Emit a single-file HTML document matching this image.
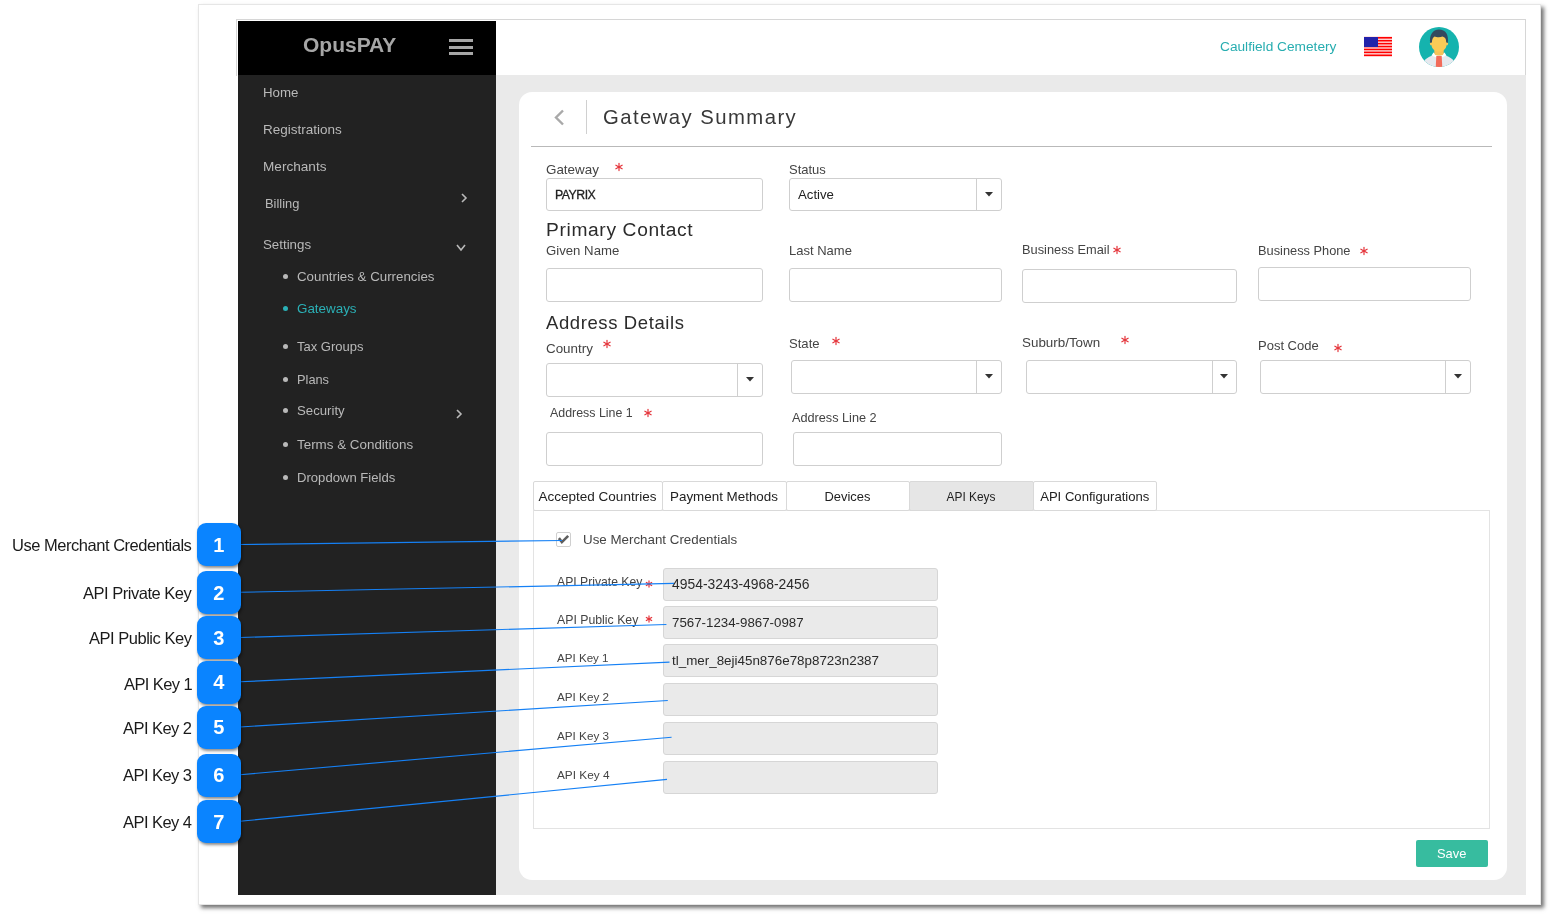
<!DOCTYPE html>
<html><head><meta charset="utf-8"><title>Gateway Summary</title>
<style>
html,body{margin:0;padding:0;background:#fff;width:1550px;height:914px;overflow:hidden;}
body{position:relative;font-family:"Liberation Sans", sans-serif;}
.t{position:absolute;white-space:nowrap;will-change:transform;}
.b{position:absolute;box-sizing:border-box;}
svg{position:absolute;overflow:visible;}
</style></head><body>

<div class="b" style="left:198px;top:4px;width:1343px;height:901px;background:#fff;border:1px solid #e6e6e6;box-shadow:3px 3px 4px rgba(0,0,0,0.55);"></div>
<div class="b" style="left:236px;top:19px;width:1290px;height:57px;border:1px solid #d6d6d6;border-bottom:none;background:#fff;"></div>
<div class="b" style="left:238px;top:21px;width:258px;height:54px;background:#000;"></div>
<div class="b" style="left:238px;top:75px;width:258px;height:820px;background:#222;"></div>
<div class="b" style="left:496px;top:75px;width:1030px;height:820px;background:#eaeaea;"></div>
<div class="b" style="left:519px;top:92px;width:988px;height:788px;background:#fff;border-radius:13px;"></div>
<div class="t" style="left:302.6px;top:34.00px;font-size:21.00px;line-height:21.00px;color:#a6a6a6;font-weight:700;">OpusPAY</div>
<div class="b" style="left:449px;top:39px;width:24px;height:3px;background:#a6a6a6;"></div>
<div class="b" style="left:449px;top:45.6px;width:24px;height:3.0px;background:#a6a6a6;"></div>
<div class="b" style="left:449px;top:52px;width:24px;height:3px;background:#a6a6a6;"></div>
<div class="t" style="left:263.2px;top:86.00px;font-size:13.30px;line-height:13.30px;color:#b9b9b9;font-weight:400;">Home</div>
<div class="t" style="left:263.2px;top:123.00px;font-size:13.50px;line-height:13.50px;color:#b9b9b9;font-weight:400;">Registrations</div>
<div class="t" style="left:263.2px;top:160.00px;font-size:13.60px;line-height:13.60px;color:#b9b9b9;font-weight:400;">Merchants</div>
<div class="t" style="left:265.3px;top:198.00px;font-size:12.90px;line-height:12.90px;color:#b9b9b9;font-weight:400;">Billing</div>
<div class="t" style="left:263.0px;top:238.00px;font-size:13.30px;line-height:13.30px;color:#b9b9b9;font-weight:400;">Settings</div>
<div class="t" style="left:297.2px;top:270.00px;font-size:13.30px;line-height:13.30px;color:#b9b9b9;font-weight:400;">Countries &amp; Currencies</div>
<div class="b" style="left:283px;top:273.8px;width:5px;height:5.0px;background:#b9b9b9;border-radius:50%;"></div>
<div class="t" style="left:297.2px;top:302.00px;font-size:13.40px;line-height:13.40px;color:#2bb0b6;font-weight:400;">Gateways</div>
<div class="b" style="left:283px;top:305.7px;width:5px;height:5.0px;background:#2bb0b6;border-radius:50%;"></div>
<div class="t" style="left:297.2px;top:340.00px;font-size:13.00px;line-height:13.00px;color:#b9b9b9;font-weight:400;">Tax Groups</div>
<div class="b" style="left:283px;top:343.9px;width:5px;height:5.0px;background:#b9b9b9;border-radius:50%;"></div>
<div class="t" style="left:297.2px;top:374.00px;font-size:12.80px;line-height:12.80px;color:#b9b9b9;font-weight:400;">Plans</div>
<div class="b" style="left:283px;top:376.7px;width:5px;height:5.0px;background:#b9b9b9;border-radius:50%;"></div>
<div class="t" style="left:297.2px;top:404.00px;font-size:13.20px;line-height:13.20px;color:#b9b9b9;font-weight:400;">Security</div>
<div class="b" style="left:283px;top:407.9px;width:5px;height:5.0px;background:#b9b9b9;border-radius:50%;"></div>
<div class="t" style="left:297.2px;top:438.00px;font-size:13.40px;line-height:13.40px;color:#b9b9b9;font-weight:400;">Terms &amp; Conditions</div>
<div class="b" style="left:283px;top:441.7px;width:5px;height:5.0px;background:#b9b9b9;border-radius:50%;"></div>
<div class="t" style="left:297.2px;top:471.00px;font-size:13.10px;line-height:13.10px;color:#b9b9b9;font-weight:400;">Dropdown Fields</div>
<div class="b" style="left:283px;top:474.5px;width:5px;height:5.0px;background:#b9b9b9;border-radius:50%;"></div>
<svg style="left:461px;top:193px" width="6" height="10"><polyline points="1,1 5,5.0 1,9" fill="none" stroke="#b9b9b9" stroke-width="1.6"/></svg>
<svg style="left:455.8px;top:243.9px" width="10" height="7"><polyline points="1,1 5.0,6 9,1" fill="none" stroke="#b9b9b9" stroke-width="1.6"/></svg>
<svg style="left:456px;top:408.5px" width="6" height="10"><polyline points="1,1 5,5.0 1,9" fill="none" stroke="#b9b9b9" stroke-width="1.6"/></svg>
<div class="t" style="left:1220.0px;top:40.00px;font-size:13.70px;line-height:13.70px;color:#27adb0;font-weight:400;">Caulfield Cemetery</div>
<svg style="left:1364px;top:37.2px" width="28" height="19" viewBox="0 0 28 19"><rect width="28" height="19" fill="#fff"/><rect x="0" y="-0.10" width="28" height="1.75" fill="#f00"/><rect x="0" y="2.82" width="28" height="1.75" fill="#f00"/><rect x="0" y="5.75" width="28" height="1.75" fill="#f00"/><rect x="0" y="8.67" width="28" height="1.75" fill="#f00"/><rect x="0" y="11.59" width="28" height="1.75" fill="#f00"/><rect x="0" y="14.52" width="28" height="1.75" fill="#f00"/><rect x="0" y="17.44" width="28" height="1.75" fill="#f00"/><rect x="0" y="0" width="28" height="19" fill="none"/><rect x="0" y="0" width="14" height="10" fill="#2222aa"/></svg>
<svg style="left:1419px;top:27px" width="40" height="40" viewBox="0 0 40 40">
<defs><clipPath id="cc"><circle cx="20" cy="20" r="20"/></clipPath></defs>
<circle cx="20" cy="20" r="20" fill="#15b3ae"/>
<g clip-path="url(#cc)">
<path d="M2,41 C3,34 8,30 15,28 L25,28 C32,30 37,34 38,41 Z" fill="#e6e9ef"/>
<polygon points="14.5,25.5 20,29.5 25.5,25.5 27.5,28.5 20,31.5 12.5,28.5" fill="#ffffff"/>
<rect x="15.3" y="20" width="9.4" height="8.5" rx="3" fill="#f5c35a"/>
<polygon points="17.3,29 22.7,29 23.3,41 16.7,41" fill="#f26b5a"/>
<ellipse cx="12.2" cy="16.6" rx="1.3" ry="2" fill="#f9c95a"/>
<ellipse cx="27.8" cy="16.6" rx="1.3" ry="2" fill="#f9c95a"/>
<path d="M12.6,13 C12.6,9.5 15.5,8.6 20,8.6 C24.5,8.6 27.4,9.5 27.4,13 L27.4,18 C27.4,22 24,24.6 20,24.6 C16,24.6 12.6,22 12.6,18 Z" fill="#fbcb57"/>
<path d="M11.2,16 C10,8.5 13.5,2.4 20,2.4 C26.5,2.4 30,7.5 28.8,16 L27.3,15.5 C27.2,12 26,10.2 23.5,9.6 C21,10.5 17,10.2 15.5,9.4 C13.8,10.5 13,12.5 12.9,15.5 Z" fill="#34495e"/>
</g></svg>
<svg style="left:553px;top:109px" width="12" height="17"><polyline points="10,1.5 3,8.5 10,15.5" fill="none" stroke="#a9a9a9" stroke-width="2.4"/></svg>
<div class="b" style="left:586px;top:100px;width:1px;height:34px;background:#d0d0d0;"></div>
<div class="t" style="left:602.5px;top:107.00px;font-size:20.30px;line-height:20.30px;color:#383838;font-weight:400;letter-spacing:1.45px;">Gateway Summary</div>
<div class="b" style="left:531px;top:146px;width:961px;height:1px;background:#b9b9b9;"></div>
<div class="t" style="left:546.3px;top:163.00px;font-size:13.40px;line-height:13.40px;color:#444;font-weight:400;">Gateway</div>
<svg style="left:614.00px;top:162.00px" width="10" height="10"><g stroke="#e5343b" stroke-width="1.2" stroke-linecap="round"><line x1="5.00" y1="1.40" x2="5.00" y2="8.60"/><line x1="1.88" y1="3.20" x2="8.12" y2="6.80"/><line x1="1.88" y1="6.80" x2="8.12" y2="3.20"/></g></svg>
<div class="b" style="left:546px;top:178px;width:217px;height:33px;background:#fff;border:1px solid #cfcfcf;border-radius:3px;"></div>
<div class="t" style="left:554.5px;top:189.00px;font-size:12.30px;line-height:12.30px;color:#222;font-weight:400;letter-spacing:-0.5px;-webkit-text-stroke:0.3px #222;">PAYRIX</div>
<div class="t" style="left:789.4px;top:163.00px;font-size:13.00px;line-height:13.00px;color:#444;font-weight:400;">Status</div>
<div class="b" style="left:789px;top:178px;width:213px;height:33px;background:#fff;border:1px solid #cfcfcf;border-radius:3px;"></div>
<div class="b" style="left:976px;top:178px;width:1px;height:33px;background:#cfcfcf;"></div>
<svg style="left:985.0px;top:191.5px" width="8" height="5"><polygon points="0,0 8,0 4,4.6" fill="#333"/></svg>
<div class="t" style="left:798.0px;top:188.00px;font-size:13.20px;line-height:13.20px;color:#222;font-weight:400;">Active</div>
<div class="t" style="left:546.0px;top:220.00px;font-size:19.20px;line-height:19.20px;color:#2b2b2b;font-weight:400;letter-spacing:0.65px;">Primary Contact</div>
<div class="t" style="left:546.0px;top:244.00px;font-size:13.20px;line-height:13.20px;color:#444;font-weight:400;">Given Name</div>
<div class="b" style="left:546px;top:268px;width:217px;height:34px;background:#fff;border:1px solid #cfcfcf;border-radius:3px;"></div>
<div class="t" style="left:789.4px;top:244.00px;font-size:13.00px;line-height:13.00px;color:#444;font-weight:400;">Last Name</div>
<div class="b" style="left:789px;top:268px;width:213px;height:34px;background:#fff;border:1px solid #cfcfcf;border-radius:3px;"></div>
<div class="t" style="left:1022.0px;top:244.00px;font-size:12.80px;line-height:12.80px;color:#444;font-weight:400;">Business Email</div>
<svg style="left:1112.30px;top:245.00px" width="10" height="10"><g stroke="#e5343b" stroke-width="1.2" stroke-linecap="round"><line x1="5.00" y1="1.40" x2="5.00" y2="8.60"/><line x1="1.88" y1="3.20" x2="8.12" y2="6.80"/><line x1="1.88" y1="6.80" x2="8.12" y2="3.20"/></g></svg>
<div class="b" style="left:1022px;top:269px;width:215px;height:34px;background:#fff;border:1px solid #cfcfcf;border-radius:3px;"></div>
<div class="t" style="left:1258.0px;top:245.00px;font-size:12.80px;line-height:12.80px;color:#444;font-weight:400;">Business Phone</div>
<svg style="left:1359.00px;top:246.00px" width="10" height="10"><g stroke="#e5343b" stroke-width="1.2" stroke-linecap="round"><line x1="5.00" y1="1.40" x2="5.00" y2="8.60"/><line x1="1.88" y1="3.20" x2="8.12" y2="6.80"/><line x1="1.88" y1="6.80" x2="8.12" y2="3.20"/></g></svg>
<div class="b" style="left:1258px;top:267px;width:213px;height:34px;background:#fff;border:1px solid #cfcfcf;border-radius:3px;"></div>
<div class="t" style="left:546.0px;top:314.00px;font-size:18.50px;line-height:18.50px;color:#2b2b2b;font-weight:400;letter-spacing:0.6px;">Address Details</div>
<div class="t" style="left:546.0px;top:342.00px;font-size:13.40px;line-height:13.40px;color:#444;font-weight:400;">Country</div>
<svg style="left:602.10px;top:339.00px" width="10" height="10"><g stroke="#e5343b" stroke-width="1.2" stroke-linecap="round"><line x1="5.00" y1="1.40" x2="5.00" y2="8.60"/><line x1="1.88" y1="3.20" x2="8.12" y2="6.80"/><line x1="1.88" y1="6.80" x2="8.12" y2="3.20"/></g></svg>
<div class="b" style="left:546px;top:363px;width:217px;height:34px;background:#fff;border:1px solid #cfcfcf;border-radius:3px;"></div>
<div class="b" style="left:737px;top:363px;width:1px;height:34px;background:#cfcfcf;"></div>
<svg style="left:746.0px;top:377.0px" width="8" height="5"><polygon points="0,0 8,0 4,4.6" fill="#333"/></svg>
<div class="t" style="left:789.0px;top:337.00px;font-size:13.10px;line-height:13.10px;color:#444;font-weight:400;">State</div>
<svg style="left:830.50px;top:335.70px" width="10" height="10"><g stroke="#e5343b" stroke-width="1.2" stroke-linecap="round"><line x1="5.00" y1="1.40" x2="5.00" y2="8.60"/><line x1="1.88" y1="3.20" x2="8.12" y2="6.80"/><line x1="1.88" y1="6.80" x2="8.12" y2="3.20"/></g></svg>
<div class="b" style="left:791px;top:360px;width:211px;height:34px;background:#fff;border:1px solid #cfcfcf;border-radius:3px;"></div>
<div class="b" style="left:976px;top:360px;width:1px;height:34px;background:#cfcfcf;"></div>
<svg style="left:985.0px;top:374.0px" width="8" height="5"><polygon points="0,0 8,0 4,4.6" fill="#333"/></svg>
<div class="t" style="left:1022.0px;top:336.00px;font-size:13.40px;line-height:13.40px;color:#444;font-weight:400;">Suburb/Town</div>
<svg style="left:1120.20px;top:335.00px" width="10" height="10"><g stroke="#e5343b" stroke-width="1.2" stroke-linecap="round"><line x1="5.00" y1="1.40" x2="5.00" y2="8.60"/><line x1="1.88" y1="3.20" x2="8.12" y2="6.80"/><line x1="1.88" y1="6.80" x2="8.12" y2="3.20"/></g></svg>
<div class="b" style="left:1026px;top:360px;width:211px;height:34px;background:#fff;border:1px solid #cfcfcf;border-radius:3px;"></div>
<div class="b" style="left:1211.5px;top:360px;width:1.0px;height:34px;background:#cfcfcf;"></div>
<svg style="left:1220.25px;top:374.0px" width="8" height="5"><polygon points="0,0 8,0 4,4.6" fill="#333"/></svg>
<div class="t" style="left:1258.0px;top:339.00px;font-size:13.00px;line-height:13.00px;color:#444;font-weight:400;">Post Code</div>
<svg style="left:1333.00px;top:342.70px" width="10" height="10"><g stroke="#e5343b" stroke-width="1.2" stroke-linecap="round"><line x1="5.00" y1="1.40" x2="5.00" y2="8.60"/><line x1="1.88" y1="3.20" x2="8.12" y2="6.80"/><line x1="1.88" y1="6.80" x2="8.12" y2="3.20"/></g></svg>
<div class="b" style="left:1260px;top:360px;width:211px;height:34px;background:#fff;border:1px solid #cfcfcf;border-radius:3px;"></div>
<div class="b" style="left:1445px;top:360px;width:1px;height:34px;background:#cfcfcf;"></div>
<svg style="left:1454.0px;top:374.0px" width="8" height="5"><polygon points="0,0 8,0 4,4.6" fill="#333"/></svg>
<div class="t" style="left:549.6px;top:407.00px;font-size:12.40px;line-height:12.40px;color:#444;font-weight:400;">Address Line 1</div>
<svg style="left:643.00px;top:408.00px" width="10" height="10"><g stroke="#e5343b" stroke-width="1.2" stroke-linecap="round"><line x1="5.00" y1="1.40" x2="5.00" y2="8.60"/><line x1="1.88" y1="3.20" x2="8.12" y2="6.80"/><line x1="1.88" y1="6.80" x2="8.12" y2="3.20"/></g></svg>
<div class="b" style="left:546px;top:432px;width:217px;height:34px;background:#fff;border:1px solid #cfcfcf;border-radius:3px;"></div>
<div class="t" style="left:791.7px;top:412.00px;font-size:12.70px;line-height:12.70px;color:#444;font-weight:400;">Address Line 2</div>
<div class="b" style="left:793px;top:432px;width:209px;height:34px;background:#fff;border:1px solid #cfcfcf;border-radius:3px;"></div>
<div class="b" style="left:533px;top:510px;width:957px;height:319px;border:1px solid #e3e3e3;"></div>
<div class="b" style="left:533px;top:481px;width:129.5px;height:30px;border:1px solid #d9d9d9;border-radius:2px;background:#fff;"></div>
<div class="b" style="left:662px;top:481px;width:124.5px;height:30px;border:1px solid #d9d9d9;border-radius:2px;background:#fff;"></div>
<div class="b" style="left:786px;top:481px;width:123.5px;height:30px;border:1px solid #d9d9d9;border-radius:2px;background:#fff;"></div>
<div class="b" style="left:909px;top:481px;width:124.5px;height:30px;border:1px solid #d9d9d9;border-radius:2px;background:#e6e6e6;"></div>
<div class="b" style="left:1033px;top:481px;width:124.0px;height:30px;border:1px solid #d9d9d9;border-radius:2px;background:#fff;"></div>
<div class="t" style="left:533px;width:129px;top:490px;font-size:13.5px;line-height:13.5px;text-align:center;color:#222;">Accepted Countries</div>
<div class="t" style="left:662px;width:124px;top:490px;font-size:13.4px;line-height:13.4px;text-align:center;color:#222;">Payment Methods</div>
<div class="t" style="left:786px;width:123px;top:491px;font-size:12.9px;line-height:12.9px;text-align:center;color:#222;">Devices</div>
<div class="t" style="left:909px;width:124px;top:492px;font-size:11.9px;line-height:11.9px;text-align:center;color:#222;">API Keys</div>
<div class="t" style="left:1033px;width:123.5px;top:490px;font-size:13.1px;line-height:13.1px;text-align:center;color:#222;">API Configurations</div>
<div class="b" style="left:556px;top:532px;width:15px;height:15px;border:1px solid #cfcfcf;border-radius:2px;background:#fff;"></div>
<svg style="left:558px;top:535px" width="12" height="9"><polyline points="0.9,3.1 3.9,7.1 10.2,0.8" fill="none" stroke="#5e5e5e" stroke-width="2.6"/></svg>
<div class="t" style="left:583.2px;top:533.00px;font-size:13.35px;line-height:13.35px;color:#444;font-weight:400;">Use Merchant Credentials</div>
<div class="t" style="left:556.6px;top:576.00px;font-size:12.20px;line-height:12.20px;color:#444;font-weight:400;">API Private Key</div>
<svg style="left:643.90px;top:578.90px" width="10" height="10"><g stroke="#e5343b" stroke-width="1.2" stroke-linecap="round"><line x1="5.00" y1="1.90" x2="5.00" y2="8.10"/><line x1="2.32" y1="3.45" x2="7.68" y2="6.55"/><line x1="2.32" y1="6.55" x2="7.68" y2="3.45"/></g></svg>
<div class="b" style="left:663px;top:568px;width:275px;height:33px;background:#eaeaea;border:1px solid #d6d6d6;border-radius:3px;"></div>
<div class="t" style="left:671.8px;top:578.00px;font-size:13.90px;line-height:13.90px;color:#2a2a2a;font-weight:400;">4954-3243-4968-2456</div>
<div class="t" style="left:556.6px;top:614.00px;font-size:12.30px;line-height:12.30px;color:#444;font-weight:400;">API Public Key</div>
<svg style="left:643.90px;top:613.90px" width="10" height="10"><g stroke="#e5343b" stroke-width="1.2" stroke-linecap="round"><line x1="5.00" y1="1.90" x2="5.00" y2="8.10"/><line x1="2.32" y1="3.45" x2="7.68" y2="6.55"/><line x1="2.32" y1="6.55" x2="7.68" y2="3.45"/></g></svg>
<div class="b" style="left:663px;top:606px;width:275px;height:33px;background:#eaeaea;border:1px solid #d6d6d6;border-radius:3px;"></div>
<div class="t" style="left:671.8px;top:616.00px;font-size:13.30px;line-height:13.30px;color:#2a2a2a;font-weight:400;">7567-1234-9867-0987</div>
<div class="t" style="left:556.6px;top:652.00px;font-size:11.60px;line-height:11.60px;color:#444;font-weight:400;">API Key 1</div>
<div class="b" style="left:663px;top:644px;width:275px;height:33px;background:#eaeaea;border:1px solid #d6d6d6;border-radius:3px;"></div>
<div class="t" style="left:671.8px;top:654.00px;font-size:13.40px;line-height:13.40px;color:#2a2a2a;font-weight:400;">tl_mer_8eji45n876e78p8723n2387</div>
<div class="t" style="left:556.6px;top:691.00px;font-size:11.70px;line-height:11.70px;color:#444;font-weight:400;">API Key 2</div>
<div class="b" style="left:663px;top:683px;width:275px;height:33px;background:#eaeaea;border:1px solid #d6d6d6;border-radius:3px;"></div>
<div class="t" style="left:556.6px;top:730.00px;font-size:11.70px;line-height:11.70px;color:#444;font-weight:400;">API Key 3</div>
<div class="b" style="left:663px;top:722px;width:275px;height:33px;background:#eaeaea;border:1px solid #d6d6d6;border-radius:3px;"></div>
<div class="t" style="left:556.6px;top:770.00px;font-size:11.80px;line-height:11.80px;color:#444;font-weight:400;">API Key 4</div>
<div class="b" style="left:663px;top:761px;width:275px;height:33px;background:#eaeaea;border:1px solid #d6d6d6;border-radius:3px;"></div>
<div class="b" style="left:1416px;top:840px;width:72px;height:27px;background:#37bc9f;border-radius:2px;"></div>
<div class="t" style="left:1437.0px;top:848.00px;font-size:12.90px;line-height:12.90px;color:#fff;font-weight:400;">Save</div>
<svg style="left:0;top:0" width="1550" height="914"><line x1="240" y1="544.5" x2="562" y2="540.5" stroke="#1580f5" stroke-width="1.15"/><line x1="240" y1="592.3" x2="674" y2="583.4" stroke="#1580f5" stroke-width="1.15"/><line x1="240" y1="637.5" x2="666.4" y2="624.5" stroke="#1580f5" stroke-width="1.15"/><line x1="240" y1="681.8" x2="669.5" y2="662.1" stroke="#1580f5" stroke-width="1.15"/><line x1="240" y1="727.0" x2="667.8" y2="700.5" stroke="#1580f5" stroke-width="1.15"/><line x1="240" y1="774.7" x2="671.6" y2="737.2" stroke="#1580f5" stroke-width="1.15"/><line x1="240" y1="821.3" x2="667" y2="779.4" stroke="#1580f5" stroke-width="1.15"/></svg>
<div class="b" style="left:197px;top:523.3px;width:43.5px;height:43.200000000000045px;background:#0a84ff;border-radius:9px;box-shadow:1px 2px 3px rgba(0,0,0,0.45);"></div>
<div class="t" style="left:197px;width:43.5px;top:535px;font-size:20px;line-height:20px;text-align:center;color:#fff;font-weight:700;">1</div>
<div class="t" style="right:1358.27px;top:537px;font-size:16.5px;line-height:16.5px;letter-spacing:-0.473px;color:#1a1a1a;">Use Merchant Credentials</div>
<div class="b" style="left:197px;top:571.0999999999999px;width:43.5px;height:43.200000000000045px;background:#0a84ff;border-radius:9px;box-shadow:1px 2px 3px rgba(0,0,0,0.45);"></div>
<div class="t" style="left:197px;width:43.5px;top:583px;font-size:20px;line-height:20px;text-align:center;color:#fff;font-weight:700;">2</div>
<div class="t" style="right:1358.28px;top:585px;font-size:16.5px;line-height:16.5px;letter-spacing:-0.483px;color:#1a1a1a;">API Private Key</div>
<div class="b" style="left:197px;top:616.3px;width:43.5px;height:43.200000000000045px;background:#0a84ff;border-radius:9px;box-shadow:1px 2px 3px rgba(0,0,0,0.45);"></div>
<div class="t" style="left:197px;width:43.5px;top:628px;font-size:20px;line-height:20px;text-align:center;color:#fff;font-weight:700;">3</div>
<div class="t" style="right:1358.28px;top:630px;font-size:16.5px;line-height:16.5px;letter-spacing:-0.481px;color:#1a1a1a;">API Public Key</div>
<div class="b" style="left:197px;top:660.5999999999999px;width:43.5px;height:43.200000000000045px;background:#0a84ff;border-radius:9px;box-shadow:1px 2px 3px rgba(0,0,0,0.45);"></div>
<div class="t" style="left:197px;width:43.5px;top:672px;font-size:20px;line-height:20px;text-align:center;color:#fff;font-weight:700;">4</div>
<div class="t" style="right:1358.40px;top:676px;font-size:16.5px;line-height:16.5px;letter-spacing:-0.6px;color:#1a1a1a;">API Key 1</div>
<div class="b" style="left:197px;top:705.8px;width:43.5px;height:43.200000000000045px;background:#0a84ff;border-radius:9px;box-shadow:1px 2px 3px rgba(0,0,0,0.45);"></div>
<div class="t" style="left:197px;width:43.5px;top:717px;font-size:20px;line-height:20px;text-align:center;color:#fff;font-weight:700;">5</div>
<div class="t" style="right:1358.34px;top:720px;font-size:16.5px;line-height:16.5px;letter-spacing:-0.541px;color:#1a1a1a;">API Key 2</div>
<div class="b" style="left:197px;top:753.5px;width:43.5px;height:43.200000000000045px;background:#0a84ff;border-radius:9px;box-shadow:1px 2px 3px rgba(0,0,0,0.45);"></div>
<div class="t" style="left:197px;width:43.5px;top:765px;font-size:20px;line-height:20px;text-align:center;color:#fff;font-weight:700;">6</div>
<div class="t" style="right:1358.34px;top:767px;font-size:16.5px;line-height:16.5px;letter-spacing:-0.541px;color:#1a1a1a;">API Key 3</div>
<div class="b" style="left:197px;top:800.0999999999999px;width:43.5px;height:43.200000000000045px;background:#0a84ff;border-radius:9px;box-shadow:1px 2px 3px rgba(0,0,0,0.45);"></div>
<div class="t" style="left:197px;width:43.5px;top:812px;font-size:20px;line-height:20px;text-align:center;color:#fff;font-weight:700;">7</div>
<div class="t" style="right:1358.34px;top:814px;font-size:16.5px;line-height:16.5px;letter-spacing:-0.541px;color:#1a1a1a;">API Key 4</div>
</body></html>
